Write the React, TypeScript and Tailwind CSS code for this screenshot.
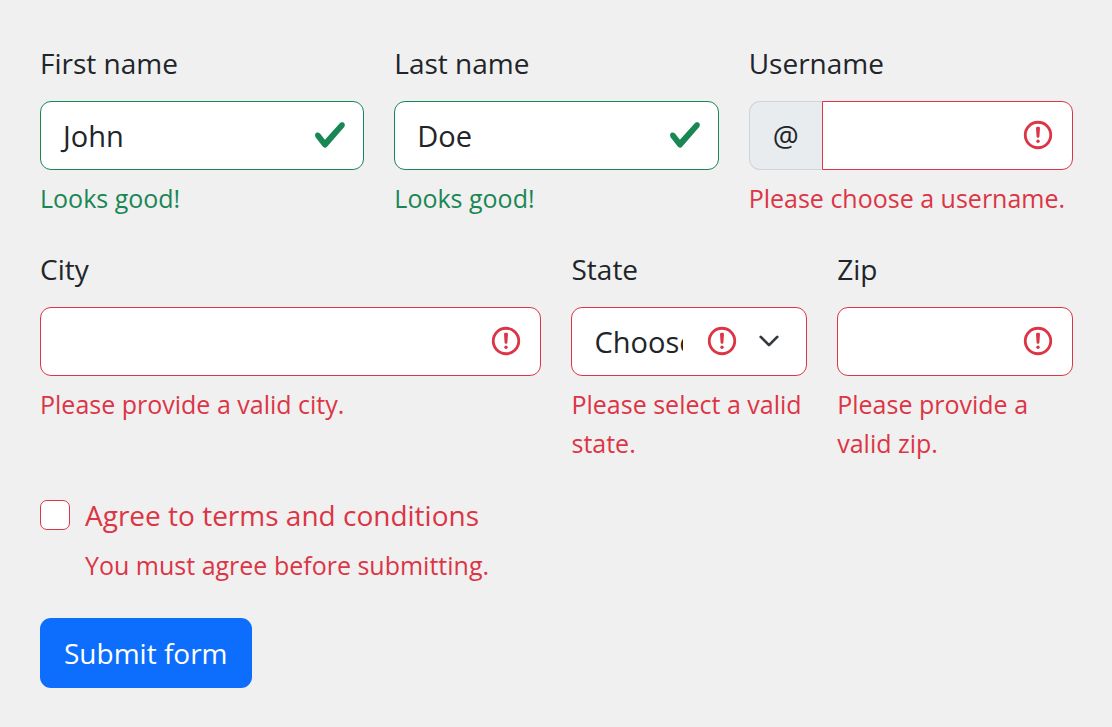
import { useState, type ReactNode } from "react";

const CONTROL =
  "h-[69px] w-full min-w-0 border bg-white pl-[14px] pr-[78px] indent-[8px] text-[29px] text-[#212529] outline-none";

function CheckMark() {
  return (
    <svg viewBox="0 0 8 8" className="pointer-events-none absolute right-[17px] top-[17px] size-[34px]" aria-hidden="true">
      <path
        fill="#198754"
        d="M2.3 6.73.6 4.53c-.4-1.04.46-1.4 1.1-.8l1.1 1.4 3.4-3.8c.6-.63 1.6-.27 1.2.7l-4 4.6c-.43.5-.8.4-1.1.1z"
      />
    </svg>
  );
}

function Alert({ className }: { className: string }) {
  return (
    <svg viewBox="0 0 12 12" fill="none" stroke="#dc3545" className={`pointer-events-none absolute top-[17px] size-[34px] ${className}`} aria-hidden="true">
      <circle cx="6" cy="6" r="4.5" />
      <path strokeLinejoin="round" d="M5.8 3.6h.4L6 6.5z" />
      <circle cx="6" cy="8.2" r=".6" fill="#dc3545" stroke="none" />
    </svg>
  );
}

function Field(props: { id: string; label: string; message: string; valid?: boolean; span: string; children: ReactNode }) {
  return (
    <div className={props.span}>
      <label htmlFor={props.id} className="mb-[15px] block text-[28px] leading-[45px]">
        {props.label}
      </label>
      {props.children}
      <p className={`mt-[9px] text-[25px] leading-[39px] ${props.valid ? "text-[#198754]" : "text-[#dc3545]"}`}>
        {props.message}
      </p>
    </div>
  );
}

export default function App() {
  const [first, setFirst] = useState("John");
  const [last, setLast] = useState("Doe");
  return (
    <main className="min-h-screen bg-[#f0f0f0] pb-[39px] pl-10 pr-[39px] pt-[41px] font-['Open_Sans',sans-serif] text-[#212529]">
      <form noValidate onSubmit={(e) => e.preventDefault()}>
        <div className="grid grid-cols-12 gap-x-[30px] gap-y-[29px]">
          <Field id="first" label="First name" message="Looks good!" valid span="col-span-4">
            <div className="relative">
              <input id="first" value={first} onChange={(e) => setFirst(e.target.value)} className={`${CONTROL} rounded-[11px] border-[#198754]`} />
              <CheckMark />
            </div>
          </Field>
          <Field id="last" label="Last name" message="Looks good!" valid span="col-span-4">
            <div className="relative">
              <input id="last" value={last} onChange={(e) => setLast(e.target.value)} className={`${CONTROL} rounded-[11px] border-[#198754]`} />
              <CheckMark />
            </div>
          </Field>
          <Field id="username" label="Username" message="Please choose a username." span="col-span-4">
            <div className="relative flex">
              <span className="flex w-[73px] shrink-0 items-center justify-center rounded-l-[11px] border border-r-0 border-[#ced4da] bg-[#e9ecef] text-[29px]">@</span>
              <input id="username" className={`${CONTROL} flex-1 rounded-r-[11px] border-[#dc3545]`} />
              <Alert className="right-[18px]" />
            </div>
          </Field>
          <Field id="city" label="City" message="Please provide a valid city." span="col-span-6">
            <div className="relative">
              <input id="city" className={`${CONTROL} rounded-[11px] border-[#dc3545]`} />
              <Alert className="right-[18px]" />
            </div>
          </Field>
          <Field id="state" label="State" message="Please select a valid state." span="col-span-3">
            <div className="relative">
              <select id="state" className="h-[69px] w-full appearance-none rounded-[11px] border border-[#dc3545] bg-white pl-[22px] pr-[123px] text-[29px] text-[#212529] outline-none">
                <option>Choose...</option>
              </select>
              <Alert className="right-[68px]" />
              <svg viewBox="0 0 16 16" className="pointer-events-none absolute right-[27px] top-[23px] size-[22px]" fill="none" stroke="#343a40" strokeWidth="2" strokeLinecap="round" strokeLinejoin="round" aria-hidden="true">
                <path d="m2 5 6 6 6-6" />
              </svg>
            </div>
          </Field>
          <Field id="zip" label="Zip" message="Please provide a valid zip." span="col-span-3">
            <div className="relative">
              <input id="zip" className={`${CONTROL} rounded-[11px] border-[#dc3545]`} />
              <Alert className="right-[18px]" />
            </div>
          </Field>
        </div>
        <div className="mt-[30px] flex gap-[15px] text-[#dc3545]">
          <input id="terms" type="checkbox" className="mt-[7px] size-[30px] shrink-0 appearance-none rounded-[7px] border border-[#dc3545] bg-white checked:bg-[#dc3545]" />
          <div>
            <label htmlFor="terms" className="block text-[28px] leading-[45px]">Agree to terms and conditions</label>
            <p className="mt-[8px] text-[25px] leading-[39px]">You must agree before submitting.</p>
          </div>
        </div>
        <button type="submit" className="mt-[33px] h-[70px] rounded-[11px] bg-[#0d6efd] px-6 text-[28px] text-white">
          Submit form
        </button>
      </form>
    </main>
  );
}
